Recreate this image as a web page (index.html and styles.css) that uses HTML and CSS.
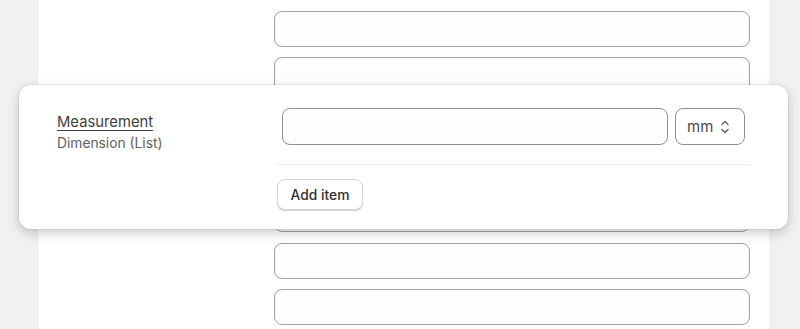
FILE: index.html
```html
<!DOCTYPE html>
<html lang="en">
<head>
    <meta charset="UTF-8">
    <meta name="viewport" content="width=device-width, initial-scale=1.0">
    <title>Measurement</title>
    <link rel="stylesheet" href="styles.css">
</head>
<body>

<div class="page">
    <div class="field-row"><div class="field-input"></div></div>
    <div class="field-row"><div class="field-input"></div></div>
    <div class="field-row"><div class="field-input"></div></div>
    <div class="field-row"><div class="field-input"></div></div>
    <div class="field-row"><div class="field-input"></div></div>
    <div class="field-row"><div class="field-input"></div></div>
    <div class="field-row"><div class="field-input"></div></div>
</div>

<div class="card">
    <div class="card-label">
        <div class="label-title">Measurement</div>
        <div class="label-type">Dimension (List)</div>
    </div>
    <div class="card-body">
        <div class="input-row">
            <div class="text-input"></div>
            <div class="unit-select">
                <span>mm</span>
                <svg width="10" height="16" viewBox="0 0 10 16">
                    <path d="M2 5.5 L5 2.5 L8 5.5" fill="none" stroke="#616161" stroke-width="1.4" stroke-linecap="round" stroke-linejoin="round"/>
                    <path d="M2 10.5 L5 13.5 L8 10.5" fill="none" stroke="#616161" stroke-width="1.4" stroke-linecap="round" stroke-linejoin="round"/>
                </svg>
            </div>
        </div>
        <div class="divider"></div>
        <button class="add-btn">Add item</button>
    </div>
</div>

</body>
</html>
```

FILE: styles.css
```css
body {
    font-family: Inter, "Noto Sans", sans-serif;
    margin: 0;
    background-color: #f1f1f1;
    height: 329px;
    overflow: hidden;
}
.page {
    background-color: white;
    margin: 0 31px 0 37px;
    height: 329px;
    padding-top: 11px;
    box-sizing: border-box;
    border-left: 1px solid #ebebeb;
}
.field-row {
    display: flex;
    justify-content: flex-end;
    padding-right: 19px;
    margin-bottom: 10.35px;
}
.field-input {
    width: 476px;
    height: 36px;
    box-sizing: border-box;
    border: 1px solid #a0a0a0;
    border-radius: 8px;
    background-color: #fdfdfd;
}
.card {
    position: absolute;
    left: 19px;
    top: 85px;
    width: 769px;
    height: 144px;
    box-sizing: border-box;
    background-color: white;
    border-radius: 12px;
    box-shadow: 0 0 0 1px rgba(0, 0, 0, 0.05), 0 4px 12px rgba(0, 0, 0, 0.2);
    display: flex;
    padding: 23px 38px 19px 38px;
}
.card-label {
    width: 219px;
    padding-top: 4px;
    line-height: 20px;
}
.label-title {
    font-size: 14.8px;
    color: #404040;
    font-weight: 400;
    text-decoration: underline;
    text-underline-offset: 3px;
}
.label-type {
    font-size: 13.8px;
    color: #616161;
    margin-top: 1px;
}
.card-body {
    flex: 1;
}
.input-row {
    display: flex;
    gap: 7px;
    padding: 0 5px 0 6px;
}
.text-input {
    flex: 1;
    height: 37px;
    box-sizing: border-box;
    border: 1px solid #8f8f8f;
    border-radius: 8px;
    background-color: #fdfdfd;
}
.unit-select {
    width: 70px;
    height: 37px;
    box-sizing: border-box;
    border: 1px solid #8f8f8f;
    border-radius: 8px;
    display: flex;
    align-items: center;
    padding-left: 11px;
    gap: 7px;
    font-size: 15px;
    color: #4a4a4a;
}
.unit-select svg {
    margin-top: 1px;
}
.divider {
    height: 1px;
    background-color: #ebebeb;
    margin: 19px 0 14px;
}
.add-btn {
    display: block;
    margin-left: 1px;
    width: 86px;
    height: 31px;
    font-family: Inter, "Noto Sans", sans-serif;
    font-size: 13.8px;
    font-weight: 500;
    color: #303030;
    background-color: white;
    border: 1px solid #d4d4d4;
    border-radius: 8px;
    box-shadow: 0 1px 0 #cfcfcf;
    cursor: pointer;
}
```
